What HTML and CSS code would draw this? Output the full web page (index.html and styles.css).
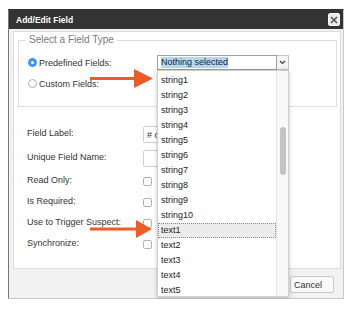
FILE: index.html
```html
<!DOCTYPE html>
<html lang="en">

<head>
      <meta charset="UTF-8">
      <title>Add/Edit Field</title>
      <link rel="stylesheet" href="styles.css">
</head>

<body>
      <div class="dialog">
            <div class="title-bar">
                  <span>Add/Edit Field</span>
                  <div class="close-button">
                        <svg width="8" height="8" viewBox="0 0 8 8"><path d="M1 1L7 7M7 1L1 7" stroke="#555" stroke-width="1.6"/></svg>
                  </div>
            </div>

            <div class="panel">
                  <fieldset class="field-type">
                        <legend>Select a Field Type</legend>
                        <div class="type-row">
                              <div class="type-label">
                                    <span class="radio checked"></span>
                                    <span>Predefined Fields:</span>
                              </div>
                              <div class="select-wrap">
                                    <div class="select">
                                          <span class="select-text"><span class="selected-text">Nothing selected</span></span>
                                          <span class="select-arrow">
                                                <svg width="7" height="5" viewBox="0 0 7 5"><path d="M1 1L3.5 3.5L6 1" fill="none" stroke="#444" stroke-width="1.2"/></svg>
                                          </span>
                                    </div>
                                    <!-- opened list -->
                                    <div class="dropdown">
                                          <div class="options">
                                                <div class="option">string1</div>
                                                <div class="option">string2</div>
                                                <div class="option">string3</div>
                                                <div class="option">string4</div>
                                                <div class="option">string5</div>
                                                <div class="option">string6</div>
                                                <div class="option">string7</div>
                                                <div class="option">string8</div>
                                                <div class="option">string9</div>
                                                <div class="option">string10</div>
                                                <div class="option active">text1</div>
                                                <div class="option">text2</div>
                                                <div class="option">text3</div>
                                                <div class="option">text4</div>
                                                <div class="option">text5</div>
                                          </div>
                                          <div class="scrollbar">
                                                <div class="thumb"></div>
                                          </div>
                                    </div>
                              </div>
                        </div>
                        <div class="type-row">
                              <div class="type-label">
                                    <span class="radio"></span>
                                    <span>Custom Fields:</span>
                              </div>
                        </div>
                  </fieldset>

                  <div class="form">
                        <div class="form-row tall">
                              <span>Field Label:</span>
                              <div class="input">#&nbsp;c</div>
                        </div>
                        <div class="form-row tall">
                              <span>Unique Field Name:</span>
                              <div class="input"></div>
                        </div>
                        <div class="form-row">
                              <span>Read Only:</span>
                              <span class="checkbox"></span>
                        </div>
                        <div class="form-row">
                              <span>Is Required:</span>
                              <span class="checkbox"></span>
                        </div>
                        <div class="form-row">
                              <span>Use to Trigger Suspect:</span>
                              <span class="checkbox"></span>
                        </div>
                        <div class="form-row">
                              <span>Synchronize:</span>
                              <span class="checkbox"></span>
                        </div>
                  </div>
            </div>

            <div class="footer">
                  <button class="cancel-button">Cancel</button>
            </div>

            <!-- Mũi tên chú thích -->
            <svg class="arrow arrow-top" width="63" height="19" viewBox="0 0 63 19">
                  <rect x="0" y="8" width="46" height="3" fill="#f15a24"/>
                  <path d="M44 0L63 9.5L44 19Z" fill="#f15a24"/>
            </svg>
            <svg class="arrow arrow-bottom" width="62" height="18" viewBox="0 0 62 18">
                  <rect x="0" y="7.5" width="48" height="3" fill="#f15a24"/>
                  <path d="M46 0L62 9L46 18Z" fill="#f15a24"/>
            </svg>
      </div>
</body>

</html>
```

FILE: styles.css
```css
* {
      box-sizing: border-box;
}

body {
      margin: 0;
      background-color: #fff;
      font-family: "Liberation Sans", Arial, sans-serif;
      font-size: 9px;
      color: #333;
}

/* Khung hộp thoại */
.dialog {
      position: relative;
      width: 336px;
      height: 290px;
      margin: 9px 0 0 8px;
      border: 1px solid #c9c9c9;
      border-left-color: #777;
      border-top-color: #333;
      background-color: #f2f2f2;
      display: flex;
      flex-direction: column;
}

.title-bar {
      height: 19px;
      flex-shrink: 0;
      display: flex;
      align-items: center;
      justify-content: space-between;
      padding: 0 3px 0 7px;
      background-color: #333;
      color: #fff;
      font-weight: bold;
      font-size: 8.5px;
}

.close-button {
      width: 12px;
      height: 13px;
      border-radius: 2px;
      background-color: #e9e9e9;
      border: 1px solid #fafafa;
      display: flex;
      align-items: center;
      justify-content: center;
}

.panel {
      height: 238px;
      margin: 2px 2px 0 4px;
      padding: 2px 3px 0 4px;
      background-color: #fff;
      border: 1px solid #dcdcdc;
}

/* Chọn loại trường */
.field-type {
      height: 73px;
      margin: 0;
      padding: 6px 0 0 0;
      border: 1px solid #dedede;
}

.field-type legend {
      margin-left: 7px;
      padding: 0 3px;
      font-size: 10px;
      line-height: 12px;
      color: #7a7a7a;
}

.type-row {
      height: 21px;
      display: flex;
      align-items: center;
}

.type-label {
      width: 138px;
      padding-left: 9px;
      display: flex;
      align-items: center;
      gap: 2px;
}

.radio {
      width: 9px;
      height: 9px;
      border-radius: 50%;
      border: 1px solid #b0b0b0;
      background-color: #fff;
      position: relative;
}

.radio.checked {
      border-color: #3a8ff0;
      background-color: #3b99fc;
}

.radio.checked::after {
      content: '';
      position: absolute;
      width: 3px;
      height: 3px;
      border-radius: 50%;
      background-color: #fff;
      left: 2px;
      top: 2px;
}

.select-wrap {
      position: relative;
}

.select {
      width: 132px;
      height: 15px;
      display: flex;
}

.select-text {
      width: 120px;
      border: 1px solid #a0a0a0;
      padding-left: 3px;
      display: flex;
      align-items: center;
      color: #222;
}

.selected-text {
      background-color: #b4d5fe;
      line-height: 11px;
}

.select-arrow {
      width: 12px;
      border: 1px solid #c4c4c4;
      border-left: none;
      background-color: #f4f4f4;
      display: flex;
      align-items: center;
      justify-content: center;
}

/* Danh sách đang mở */
.dropdown {
      position: absolute;
      top: 100%;
      left: 0;
      width: 132px;
      height: 227px;
      padding-top: 2px;
      background-color: #fff;
      border: 1px solid #cfcfcf;
      box-shadow: 0 1px 4px rgba(0, 0, 0, 0.25);
      z-index: 2;
}

.options {
      margin-right: 12px;
}

.option {
      height: 15px;
      line-height: 15px;
      padding-left: 3px;
      color: #222;
}

.option.active {
      background-color: #ececec;
      outline: 1px dotted #888;
      outline-offset: -1px;
}

.scrollbar {
      position: absolute;
      top: 0;
      right: 0;
      bottom: 0;
      width: 12px;
      background-color: #f8f8f8;
      border-left: 1px solid #e4e4e4;
}

.thumb {
      position: absolute;
      top: 56px;
      left: 3px;
      width: 6px;
      height: 48px;
      border-radius: 3px;
      background-color: #c4c4c4;
}

/* Các trường nhập */
.form {
      margin-top: 14px;
      padding-left: 9px;
}

.form-row {
      height: 21px;
      display: flex;
      align-items: center;
}

.form-row.tall {
      height: 24px;
}

.form-row > span:first-child {
      width: 116px;
}

.input {
      width: 130px;
      height: 17px;
      margin-top: 3px;
      padding-left: 3px;
      border: 1px solid #d0d0d0;
      border-radius: 2px;
      display: flex;
      align-items: center;
      color: #333;
}

.checkbox {
      width: 9px;
      height: 9px;
      margin-top: 3px;
      border: 1px solid #b3b3b3;
      border-radius: 2px;
      background-color: #fff;
}

.footer {
      flex: 1;
      display: flex;
      justify-content: flex-end;
      align-items: flex-start;
      padding: 7px 9px 0 0;
}

.cancel-button {
      width: 44px;
      height: 17px;
      padding: 0 0 0 3px;
      text-align: left;
      font-family: "Liberation Sans", Arial, sans-serif;
      font-size: 9px;
      color: #333;
      background-color: #f9f9f9;
      border: 1px solid #c8c8c8;
      border-radius: 2px;
}

/* Mũi tên chú thích */
.arrow {
      position: absolute;
      z-index: 3;
}

.arrow-top {
      left: 81px;
      top: 59px;
}

.arrow-bottom {
      left: 81px;
      top: 210px;
}
```
